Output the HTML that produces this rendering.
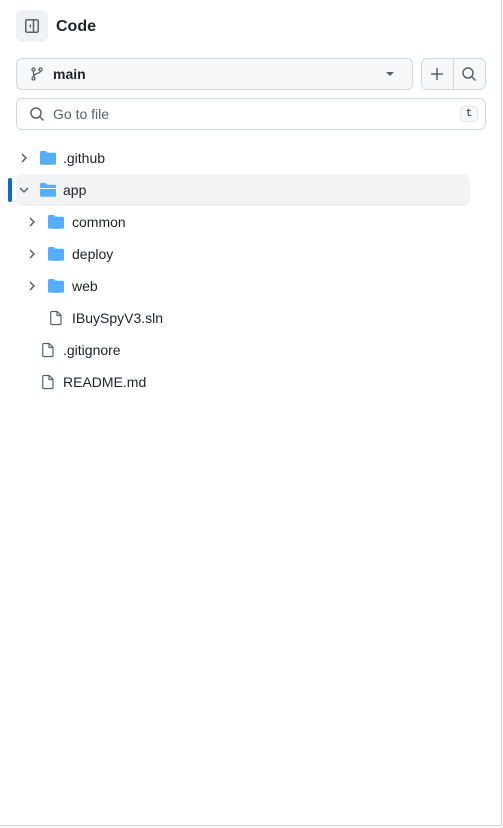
<!DOCTYPE html><html><head><style>
body{margin:0;width:503px;height:828px;background:#f6f8fa;font-family:"Liberation Sans",sans-serif;color:#1f2328;position:relative;overflow:hidden}
.panel{position:absolute;left:0;top:0;width:501px;height:825px;background:#fff;border-right:1px solid #d1d9e0;border-bottom:1px solid #d1d9e0}
.a{position:absolute}
.btn{background:#f6f8fa;border:1px solid #d1d9e0;border-radius:6px;box-sizing:border-box}
svg{position:absolute}
</style></head><body><div class="panel">
<div class="a" style="left:16px;top:10px;width:32px;height:32px;background:#eff2f5;border-radius:6px"></div>
<svg style="left:24px;top:18px" width="16" height="16" viewBox="0 0 16 16"><rect x="1.75" y="1.75" width="12.5" height="12.5" rx="1.5" fill="none" stroke="#59636e" stroke-width="1.5"/><line x1="9.5" y1="2" x2="9.5" y2="14" stroke="#59636e" stroke-width="1.5"/><path d="M7 6v4L5 8z" fill="#59636e"/></svg>
<div class="a" style="left:56px;top:17px;font-size:16px;font-weight:bold;line-height:20px">Code</div>
<div class="a btn" style="left:16px;top:58px;width:397px;height:32px"></div>
<svg style="left:29px;top:66px" width="16" height="16" viewBox="0 0 16 16" fill="none" stroke="#59636e" stroke-width="1.3"><circle cx="4.5" cy="3.5" r="1.5"/><circle cx="4.5" cy="12.5" r="1.5"/><circle cx="11.5" cy="3.5" r="1.5"/><path d="M4.5 5v6M11.5 5c0 3-7 2-7 6"/></svg>
<div class="a" style="left:53px;top:64px;font-size:14px;font-weight:bold;line-height:20px">main</div>
<svg style="left:386px;top:71px" width="8" height="6"><path d="M0 1h8L4 5z" fill="#59636e"/></svg>
<div class="a btn" style="left:421px;top:58px;width:65px;height:32px"></div>
<div class="a" style="left:453px;top:59px;width:1px;height:30px;background:#d1d9e0"></div>
<svg style="left:429px;top:66px" width="16" height="16"><path d="M8 2v12M2 8h12" stroke="#59636e" stroke-width="1.5"/></svg>
<svg style="left:461px;top:66px" width="16" height="16" fill="none" stroke="#59636e" stroke-width="1.5"><circle cx="7" cy="7" r="5"/><path d="M10.5 10.5l4 4"/></svg>
<div class="a" style="left:16px;top:98px;width:470px;height:32px;border:1px solid #d1d9e0;border-radius:6px;box-sizing:border-box"></div>
<svg style="left:29px;top:106px" width="16" height="16" fill="none" stroke="#59636e" stroke-width="1.5"><circle cx="7" cy="7" r="5"/><path d="M10.5 10.5l4 4"/></svg>
<div class="a" style="left:53px;top:104px;font-size:14px;line-height:20px;color:#59636e">Go to file</div>
<div class="a" style="left:460px;top:106px;width:18px;height:16px;background:#f6f8fa;border:1px solid #e4e8ec;border-radius:4px;box-sizing:border-box;font:11px 'Liberation Mono',monospace;text-align:center;line-height:14px">t</div>

<div class="a" style="left:16px;top:174px;width:454px;height:32px;background:#f1f3f5;border-radius:6px"></div>
<div class="a" style="left:8px;top:178px;width:4px;height:24px;background:#0969da;border-radius:2px"></div>

<svg width="0" height="0"><defs>
<g id="f"><path d="M0 2.5A1.5 1.5 0 0 1 1.5 1h4.3l1.5 1.8h7.2A1.5 1.5 0 0 1 16 4.3v8.9a1.5 1.5 0 0 1-1.5 1.5h-13A1.5 1.5 0 0 1 0 13.2z" fill="#54aeff"/></g>
<g id="d"><path d="M3.75 1.5h5.5L13 5.25v8.25a1 1 0 0 1-1 1H3.75a1 1 0 0 1-1-1V2.5a1 1 0 0 1 1-1zM9 1.75V5.5h3.75" fill="none" stroke="#59636e" stroke-width="1.2"/></g>
<g id="c"><path d="M6 4l4 4-4 4" fill="none" stroke="#59636e" stroke-width="1.5"/></g>
</defs></svg>

<svg style="left:16px;top:150px" width="16" height="16"><use href="#c"/></svg>
<svg style="left:40px;top:150px" width="16" height="16"><use href="#f"/></svg>
<div class="a" style="left:63px;top:150px;font-size:14px;line-height:16px">.github</div>

<svg style="left:16px;top:182px" width="16" height="16"><path d="M4 6l4 4 4-4" fill="none" stroke="#59636e" stroke-width="1.5"/></svg>
<svg style="left:40px;top:182px" width="16" height="16"><use href="#f"/><path d="M0 6.5h16" stroke="#fff" stroke-width="1"/></svg>
<div class="a" style="left:63px;top:182px;font-size:14px;line-height:16px">app</div>

<svg style="left:24px;top:214px" width="16" height="16"><use href="#c"/></svg>
<svg style="left:48px;top:214px" width="16" height="16"><use href="#f"/></svg>
<div class="a" style="left:72px;top:214px;font-size:14px;line-height:16px">common</div>
<svg style="left:24px;top:246px" width="16" height="16"><use href="#c"/></svg>
<svg style="left:48px;top:246px" width="16" height="16"><use href="#f"/></svg>
<div class="a" style="left:72px;top:246px;font-size:14px;line-height:16px">deploy</div>
<svg style="left:24px;top:278px" width="16" height="16"><use href="#c"/></svg>
<svg style="left:48px;top:278px" width="16" height="16"><use href="#f"/></svg>
<div class="a" style="left:72px;top:278px;font-size:14px;line-height:16px">web</div>
<svg style="left:48px;top:310px" width="16" height="16"><use href="#d"/></svg>
<div class="a" style="left:72px;top:310px;font-size:14px;line-height:16px">IBuySpyV3.sln</div>
<svg style="left:40px;top:342px" width="16" height="16"><use href="#d"/></svg>
<div class="a" style="left:63px;top:342px;font-size:14px;line-height:16px">.gitignore</div>
<svg style="left:40px;top:374px" width="16" height="16"><use href="#d"/></svg>
<div class="a" style="left:63px;top:374px;font-size:14px;line-height:16px">README.md</div>
</div></body></html>
